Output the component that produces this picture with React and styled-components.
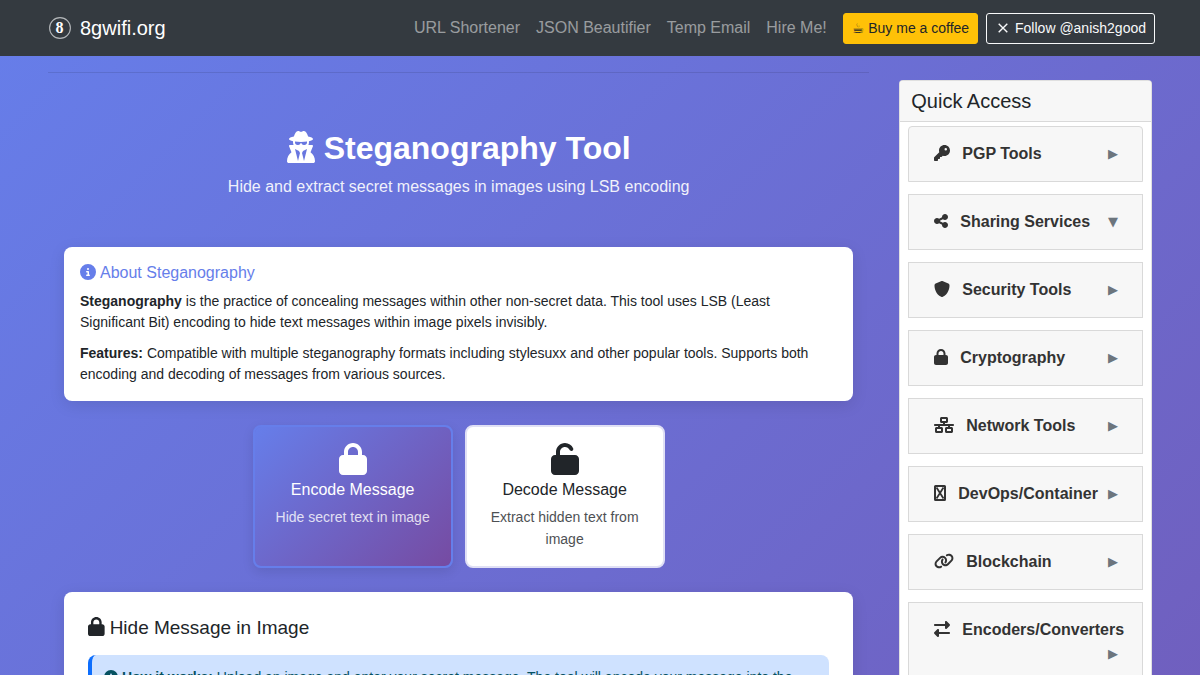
import React from "react";
import styled, { createGlobalStyle, css } from "styled-components";
import { IconContext } from "react-icons";
import {
  FaUserSecret,
  FaCircleInfo,
  FaLock,
  FaUnlock,
  FaKey,
  FaShareNodes,
  FaShield,
  FaNetworkWired,
  FaLink,
  FaRightLeft,
} from "react-icons/fa6";

const GlobalStyle = createGlobalStyle`
  *, *::before, *::after { box-sizing: border-box; }
  body {
    margin: 0;
    font-family: "Liberation Sans", Arial, sans-serif;
    font-size: 16px;
    line-height: 24px;
    color: #212529;
    background: #764ba2 linear-gradient(135deg, #667eea 0%, #764ba2 100%) no-repeat;
    background-size: 100% 1920px;
  }
  h1, h2, h3, p { margin: 0; font-weight: 400; }
  button { font: inherit; color: inherit; cursor: pointer; }
  svg { height: 1em; width: auto; flex: none; }
`;

const Navbar = styled.nav`
  display: flex;
  align-items: center;
  justify-content: space-between;
  min-height: 56px;
  padding: 0 45px;
  background: #343a40;
`;

const Brand = styled.a`
  display: flex;
  align-items: center;
  gap: 5px;
  font-size: 20px;
  line-height: 30px;
  color: #fff;
  text-decoration: none;
`;

const LogoMark = styled.svg`
  && {
    width: 30px;
    height: 30px;
  }
`;

const NavList = styled.div`
  display: flex;
  align-items: center;
  gap: 8px;
`;

const NavLinks = styled.div`
  display: flex;
`;

const NavLink = styled.a`
  padding: 0 8px;
  color: rgba(255, 255, 255, 0.5);
  text-decoration: none;
`;

const ActionLink = styled.a`
  display: inline-block;
  padding: 4px 8px;
  border: 1px solid ${(p) => (p.$solid ? "#ffc107" : "#f8f9fa")};
  border-radius: 3px;
  background: ${(p) => (p.$solid ? "#ffc107" : "transparent")};
  color: ${(p) => (p.$solid ? "#212529" : "#f8f9fa")};
  font-size: 14px;
  line-height: 21px;
  text-decoration: none;
`;

const Glyph = styled.span`
  font-family: "DejaVu Sans", sans-serif;
  line-height: 1;
`;

const CrossMark = styled.svg`
  && {
    width: 16px;
    height: 16px;
    vertical-align: -3px;
  }
`;

const Page = styled.div`
  display: grid;
  grid-template-columns: minmax(0, 13fr) minmax(0, 4fr);
  gap: 30px;
  align-items: start;
  padding: 16px 48px 0;
`;

const Divider = styled.hr`
  margin: 0;
  border: 0;
  border-top: 1px solid rgba(0, 0, 0, 0.1);
`;

const Main = styled.main`
  display: flex;
  flex-direction: column;
`;

const Content = styled.div`
  display: flex;
  flex-direction: column;
  gap: 24px;
  padding: 0 16px 24px;
`;

const Hero = styled.header`
  display: flex;
  flex-direction: column;
  align-items: center;
  gap: 8px;
  padding: 56px 0 24px;
  color: #fff;
  text-align: center;
`;

const HeroTitle = styled.h1`
  && {
    display: flex;
    align-items: center;
    gap: 9px;
    font-size: 32px;
    line-height: 38px;
    font-weight: 700;
  }

  svg {
    margin-bottom: 2px;
  }
`;

const HeroText = styled.p`
  opacity: 0.9;
`;

const Card = styled.section`
  padding: ${(p) => (p.$roomy ? "24px" : "16px")};
  border-radius: 8px;
  background: #fff;
  box-shadow: 0 4px 16px rgba(0, 0, 0, 0.1);
`;

const AboutTitle = styled.h2`
  && {
    display: flex;
    align-items: center;
    gap: 4px;
    margin-bottom: 8px;
    font-size: 16px;
    line-height: 20px;
    color: #667eea;
  }

  svg {
    margin-bottom: 2px;
  }
`;

const AboutText = styled.p`
  font-size: 14px;
  line-height: 21px;

  & + & {
    margin-top: 10px;
  }
`;

const ModeRow = styled.div`
  display: flex;
  flex-wrap: wrap;
  justify-content: center;
  gap: 12px;
`;

const activeMode = css`
  border-color: #667eea;
  background: linear-gradient(135deg, #667eea 0%, #764ba2 100%) padding-box;
  color: #fff;
  box-shadow: 0 4px 12px rgba(0, 0, 0, 0.1);
`;

const ModeButton = styled.button`
  display: flex;
  flex-direction: column;
  align-items: center;
  width: 200px;
  padding: 16px;
  border: 2px solid #e0e0f5;
  border-radius: 8px;
  background: #fff;
  color: #212529;
  text-align: center;
  ${(p) => p.$active && activeMode}

  svg {
    margin-bottom: 5px;
    font-size: 32px;
  }
`;

const ModeTitle = styled.span`
  margin-bottom: 6px;
  line-height: 20px;
`;

const ModeText = styled.span`
  font-size: 14px;
  line-height: 22px;
  opacity: 0.8;
`;

const FormTitle = styled.h2`
  display: flex;
  align-items: center;
  gap: 5px;
  font-size: 19px;
  line-height: 23px;

  svg {
    margin-bottom: 2px;
  }
`;

const Notice = styled.div`
  margin-top: 16px;
  padding: 11px 12px;
  border-left: 4px solid #0d6efd;
  border-radius: 8px;
  background: #cfe2ff;
  color: #055160;
  font-size: 14px;
  line-height: 22px;

  svg {
    vertical-align: -2px;
  }
`;

const Sidebar = styled.aside`
  margin-top: 8px;
  border: 1px solid rgba(0, 0, 0, 0.12);
  border-radius: 4px;
  background: #fff;
`;

const SidebarTitle = styled.h2`
  padding: 8px 11px;
  border-bottom: 1px solid #d9d9d9;
  border-radius: 3px 3px 0 0;
  background: #f7f7f7;
  font-size: 20px;
  line-height: 24px;
`;

const ToolList = styled.div`
  display: flex;
  flex-direction: column;
  gap: 12px;
  padding: 4px 8px;
`;

const ToolButton = styled.button`
  display: flex;
  flex-wrap: wrap;
  align-items: center;
  width: 100%;
  padding: 15px 24px 15px 25px;
  border: 1px solid #d9d9d9;
  border-radius: 0;
  background: #f7f7f7;
  color: #333;
  text-align: left;

  &:first-child {
    border-radius: 4px 4px 0 0;
  }
`;

const ToolLabel = styled.span`
  display: flex;
  align-items: center;
  gap: 12px;
  font-weight: 700;
  white-space: nowrap;

  svg {
    margin-bottom: 2px;
  }
`;

const Arrow = styled.span`
  margin-left: auto;
  font-family: "DejaVu Sans", sans-serif;
  font-size: 13px;
  line-height: 24px;
  color: #6c757d;
`;

const EmptyGlyph = () => (
  <svg viewBox="0 0 12 16" fill="none" stroke="currentColor" aria-hidden="true">
    <rect x="1" y="1" width="10" height="14" rx="0.5" strokeWidth="2" />
    <path d="M2.5 2.5 L9.5 13.5 M9.5 2.5 L2.5 13.5" strokeWidth="1.8" />
  </svg>
);

const Cross = () => (
  <CrossMark viewBox="0 0 16 16" fill="none" stroke="currentColor" aria-hidden="true">
    <path d="M3.7 3.7 L12.3 12.3 M12.3 3.7 L3.7 12.3" strokeWidth="1.4" />
  </CrossMark>
);

const Logo = () => (
  <LogoMark viewBox="0 0 30 30" aria-hidden="true">
    <circle cx="15" cy="15" r="10.4" fill="none" stroke="#b4b7ba" strokeWidth="1.1" />
    <text
      x="14.5"
      y="20"
      textAnchor="middle"
      fontFamily="Liberation Serif, serif"
      fontWeight="700"
      fontSize="16"
      fill="#fff"
    >
      8
    </text>
  </LogoMark>
);

const iconDefaults = { size: "auto" };

const navLinks = ["URL Shortener", "JSON Beautifier", "Temp Email", "Hire Me!"];

const modes = [
  { title: "Encode Message", text: "Hide secret text in image", icon: FaLock },
  { title: "Decode Message", text: "Extract hidden text from image", icon: FaUnlock },
];

const tools = [
  { label: "PGP Tools", icon: FaKey },
  { label: "Sharing Services", icon: FaShareNodes, open: true },
  { label: "Security Tools", icon: FaShield },
  { label: "Cryptography", icon: FaLock },
  { label: "Network Tools", icon: FaNetworkWired },
  { label: "DevOps/Container", icon: EmptyGlyph },
  { label: "Blockchain", icon: FaLink },
  { label: "Encoders/Converters", icon: FaRightLeft },
];

export default function App() {
  const [mode, setMode] = React.useState(0);

  return (
    <IconContext.Provider value={iconDefaults}>
      <GlobalStyle />
      <Navbar>
        <Brand href="#">
          <Logo />
          8gwifi.org
        </Brand>
        <NavList>
          <NavLinks>
            {navLinks.map((label) => (
              <NavLink key={label} href="#">
                {label}
              </NavLink>
            ))}
          </NavLinks>
          <ActionLink href="#" $solid>
            <Glyph>☕</Glyph> Buy me a coffee
          </ActionLink>
          <ActionLink href="#">
            <Cross /> Follow @anish2good
          </ActionLink>
        </NavList>
      </Navbar>

      <Page>
        <Main>
          <Divider />
          <Content>
            <Hero>
              <HeroTitle>
                <FaUserSecret />
                Steganography Tool
              </HeroTitle>
              <HeroText>Hide and extract secret messages in images using LSB encoding</HeroText>
            </Hero>

            <Card>
              <AboutTitle>
                <FaCircleInfo />
                About Steganography
              </AboutTitle>
              <AboutText>
                <strong>Steganography</strong> is the practice of concealing messages within other
                non-secret data. This tool uses LSB (Least Significant Bit) encoding to hide text
                messages within image pixels invisibly.
              </AboutText>
              <AboutText>
                <strong>Features:</strong> Compatible with multiple steganography formats including
                stylesuxx and other popular tools. Supports both encoding and decoding of messages
                from various sources.
              </AboutText>
            </Card>

            <ModeRow>
              {modes.map(({ title, text, icon: Icon }, i) => (
                <ModeButton
                  key={title}
                  type="button"
                  $active={mode === i}
                  aria-pressed={mode === i}
                  onClick={() => setMode(i)}
                >
                  <Icon />
                  <ModeTitle>{title}</ModeTitle>
                  <ModeText>{text}</ModeText>
                </ModeButton>
              ))}
            </ModeRow>

            <Card $roomy>
              <FormTitle>
                <FaLock />
                Hide Message in Image
              </FormTitle>
              <Notice>
                <FaCircleInfo /> <strong>How it works:</strong> Upload an image and enter your
                secret message. The tool will encode your message into the
              </Notice>
            </Card>
          </Content>
        </Main>

        <Sidebar>
          <SidebarTitle>Quick Access</SidebarTitle>
          <ToolList>
            {tools.map(({ label, icon: Icon, open }) => (
              <ToolButton key={label} type="button" aria-expanded={!!open}>
                <ToolLabel>
                  <Icon />
                  {label}
                </ToolLabel>
                <Arrow aria-hidden="true">{open ? "▼" : "▶"}</Arrow>
              </ToolButton>
            ))}
          </ToolList>
        </Sidebar>
      </Page>
    </IconContext.Provider>
  );
}
